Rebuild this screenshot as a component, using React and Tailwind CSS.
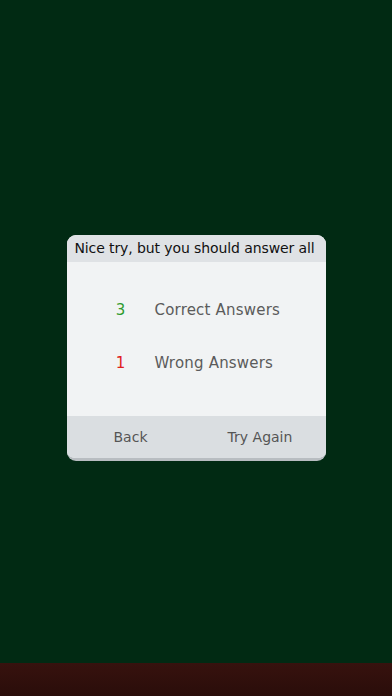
export default function App() {
  const font = { fontFamily: '"DejaVu Sans", "Noto Sans", sans-serif' };
  return (
    <div className="flex h-[696px] w-[392px] flex-col overflow-hidden" style={font}>
      <div className="flex flex-1 justify-center bg-[#012a13] pt-[235px]">
        <div className="flex h-[226px] w-[259px] flex-col overflow-hidden rounded-[9px] border-b-[3px] border-[#b8bdc1] bg-[#f1f3f4]">
          <div className="flex h-[27px] items-center justify-center pr-[3px] bg-[#dfe2e5] text-[14px] tracking-[-0.1px] text-[#111]">
            Nice try, but you should answer all
          </div>
          <div className="flex flex-1 flex-col justify-center gap-[30px] pb-[5px] pl-[20px] text-[15px] tracking-[0.2px] text-[#5b5b5b]">
            <div className="flex items-center">
              <span className="w-[68px] text-center text-[#2e9a2e]">3</span>
              <span>Correct Answers</span>
            </div>
            <div className="flex items-center">
              <span className="w-[68px] text-center text-[#e0201c]">1</span>
              <span>Wrong Answers</span>
            </div>
          </div>
          <div className="flex h-[42px] items-center bg-[#dadee1] text-[14px] text-[#555]">
            <span className="w-[128px] text-center">Back</span>
            <span className="flex-1 text-center">Try Again</span>
          </div>
        </div>
      </div>
      <div className="h-[33px] bg-gradient-to-b from-[#37120e] to-[#2a0d0a]" />
    </div>
  );
}
